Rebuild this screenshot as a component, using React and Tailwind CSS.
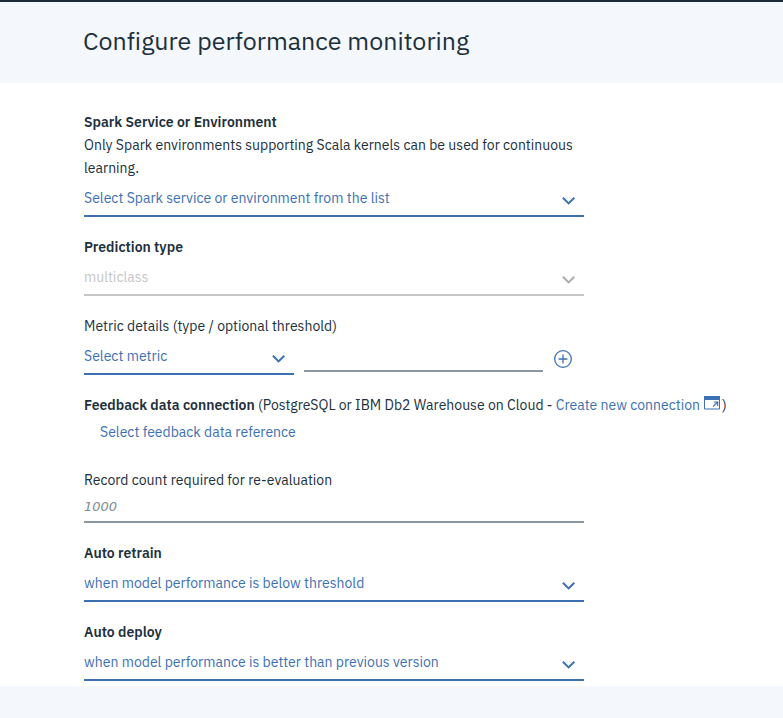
import React from 'react';

function Chevron({ className }) {
  return (
    <svg className={className} width="14" height="10" viewBox="0 0 14 10" fill="none" stroke="currentColor" strokeWidth="2">
      <path d="M.9 1.7 L6.6 7.4 L12.3 1.7" />
    </svg>
  );
}

function Label({ children, className = '' }) {
  return <div className={`h-[23px] whitespace-nowrap leading-[23px] ${className}`}>{children}</div>;
}

function Select({ text, width = 'w-[500px]', disabled = false }) {
  return (
    <button
      type="button"
      disabled={disabled}
      className={`flex h-[37px] items-start justify-between border-b-2 pr-2 ${width} ${
        disabled ? 'border-[#c6c6c6] text-[#c6c6c6]' : 'border-[#3d70b2] text-[#3d70b2]'
      }`}
    >
      <span className="mt-[7px] whitespace-nowrap leading-[23px] tracking-[0.01px]">{text}</span>
      <Chevron className={`mt-[16px] ${disabled ? 'text-[#adadad]' : ''}`} />
    </button>
  );
}

function AddIcon() {
  return (
    <svg className="ml-[11px] mt-[12px]" width="18" height="18" viewBox="0 0 18 18" fill="none" stroke="#3d70b2" strokeWidth="1.3">
      <circle cx="9" cy="9" r="8.3" />
      <path d="M9 4.6v8.8M4.6 9h8.8" />
    </svg>
  );
}

function LaunchIcon() {
  return (
    <svg className="ml-1 mt-[2px] shrink-0" width="18" height="14" viewBox="0 0 18 14" fill="none" stroke="#3d70b2">
      <path d="M.5 .5h15v12.5h-15z" />
      <path d="M0 0h16v4H0z" fill="#3d70b2" stroke="none" />
      <path d="M9 10.7l4.2-4.2M9.8 6h3.9v3.9" strokeWidth="1.1" />
    </svg>
  );
}

export default function App() {
  return (
    <div className="flex h-[718px] w-[783px] flex-col overflow-hidden bg-[#f4f7fb] font-['IBM_Plex_Sans',Roboto,sans-serif] text-[14px] tracking-[0.01px] text-[#20303c]">
      <header className="h-[83px] border-t-2 border-[#1d2b36] pl-[83px] pt-[21px]">
        <h1 className="whitespace-nowrap text-[25px] leading-[36px]">Configure performance monitoring</h1>
      </header>
      <main className="flex h-[603px] flex-col bg-white pl-[84px] pt-[28px]">
        <section className="mb-[19px]">
          <Label className="font-semibold">Spark Service or Environment</Label>
          <Label>Only Spark environments supporting Scala kernels can be used for continuous</Label>
          <Label>learning.</Label>
          <Select text="Select Spark service or environment from the list" />
        </section>
        <section className="mb-[19px]">
          <Label className="font-semibold">Prediction type</Label>
          <Select text="multiclass" disabled />
        </section>
        <section className="mb-[19px]">
          <Label>Metric details (type / optional threshold)</Label>
          <div className="flex h-[37px] items-start">
            <Select text="Select metric" width="w-[210px]" />
            <input aria-label="threshold" className="ml-[10px] h-[34px] w-[239px] border-b-2 border-[#8897a2] outline-none" />
            <AddIcon />
          </div>
        </section>
        <section className="mb-[25px]">
          <Label className="flex">
            <span className="font-semibold">Feedback data connection</span>
            <span className="whitespace-pre"> (PostgreSQL or IBM Db2 Warehouse on Cloud - </span>
            <a className="text-[#3d70b2]">Create new connection</a>
            <LaunchIcon />
            <span>)</span>
          </Label>
          <Label className="mt-1 pl-4 text-[#3d70b2]">Select feedback data reference</Label>
        </section>
        <section className="mb-[19px]">
          <Label>Record count required for re-evaluation</Label>
          <input
            placeholder="1000"
            className="block h-[31px] w-[500px] border-b-2 border-[#8897a2] font-['DejaVu_Sans',sans-serif] text-[13px] font-extralight italic outline-none placeholder:text-[#7f8b94]"
          />
        </section>
        <section className="mb-[19px]">
          <Label className="font-semibold">Auto retrain</Label>
          <Select text="when model performance is below threshold" />
        </section>
        <section>
          <Label className="font-semibold">Auto deploy</Label>
          <Select text="when model performance is better than previous version" />
        </section>
      </main>
    </div>
  );
}
